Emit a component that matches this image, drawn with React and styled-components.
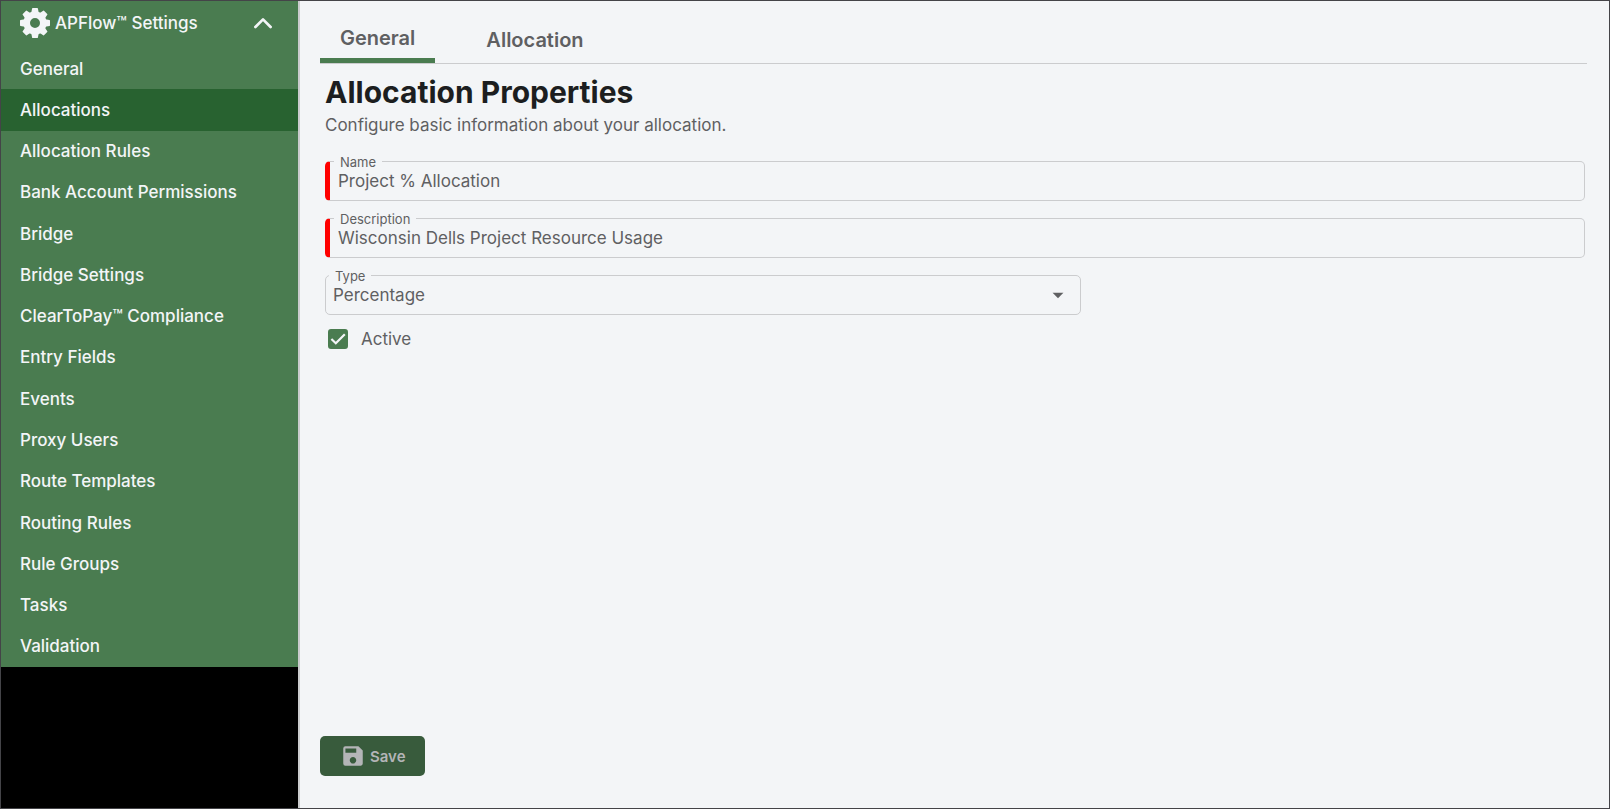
import { useState } from "react";
import styled, { createGlobalStyle } from "styled-components";
import { MdArrowDropDown, MdSave } from "react-icons/md";

const NAV_ITEMS = [
  "General",
  "Allocations",
  "Allocation Rules",
  "Bank Account Permissions",
  "Bridge",
  "Bridge Settings",
  "ClearToPay™ Compliance",
  "Entry Fields",
  "Events",
  "Proxy Users",
  "Route Templates",
  "Routing Rules",
  "Rule Groups",
  "Tasks",
  "Validation",
];

const TEETH = [0, 45, 90, 135, 180, 225, 270, 315];

const GearIcon = () => (
  <svg width="30" height="30" viewBox="0 0 30 30" fill="none" aria-hidden="true">
    <circle cx="15" cy="15" r="8.3" stroke="currentColor" strokeWidth="6.6" />
    {TEETH.map((angle) => (
      <path
        key={angle}
        d="M11.2 5 L12.1 0.5 Q12.2 0 12.7 0 H17.3 Q17.8 0 17.9 0.5 L18.8 5 Z"
        fill="currentColor"
        transform={`rotate(${angle} 15 15)`}
      />
    ))}
  </svg>
);

const ChevronIcon = () => (
  <svg width="18" height="12" viewBox="0 0 18 12" fill="none" aria-hidden="true">
    <path
      d="M1.4 10 L9 2.4 L16.6 10"
      stroke="currentColor"
      strokeWidth="2.7"
      strokeLinecap="round"
      strokeLinejoin="round"
    />
  </svg>
);

const CheckIcon = () => (
  <svg width="20" height="20" viewBox="0 0 20 20" fill="none" aria-hidden="true">
    <path d="M3.4 10 L7.8 14.3 L16.8 5.3" stroke="currentColor" strokeWidth="2.2" />
  </svg>
);

const App = () => {
  const [page, setPage] = useState("Allocations");
  const [open, setOpen] = useState(true);
  const [name, setName] = useState("Project % Allocation");
  const [description, setDescription] = useState(
    "Wisconsin Dells Project Resource Usage"
  );
  const [type, setType] = useState("Percentage");
  const [active, setActive] = useState(true);

  return (
    <>
      <GlobalStyle />
      <Frame>
        <Sidebar>
          <SidebarHeader aria-expanded={open} onClick={() => setOpen(!open)}>
            <GearIcon />
            <span>APFlow™ Settings</span>
            <ChevronIcon />
          </SidebarHeader>
          {open && (
            <NavList>
              {NAV_ITEMS.map((item) => (
                <NavItem key={item}>
                  <NavLink
                    href="#"
                    $active={item === page}
                    onClick={() => setPage(item)}
                  >
                    {item}
                  </NavLink>
                </NavItem>
              ))}
            </NavList>
          )}
        </Sidebar>

        <Main>
          <Tabs role="tablist">
            <Tab role="tab" aria-selected="true" $selected>
              General
            </Tab>
            <Tab role="tab" aria-selected="false">
              Allocation
            </Tab>
          </Tabs>

          <Form>
            <Title>Allocation Properties</Title>
            <Subtitle>Configure basic information about your allocation.</Subtitle>

            <Fields>
              <Field>
                <FieldLabel htmlFor="name" $required>
                  Name
                </FieldLabel>
                <TextInput
                  id="name"
                  type="text"
                  value={name}
                  onChange={(e) => setName(e.target.value)}
                />
              </Field>
              <Field>
                <FieldLabel htmlFor="description" $required>
                  Description
                </FieldLabel>
                <TextInput
                  id="description"
                  type="text"
                  value={description}
                  onChange={(e) => setDescription(e.target.value)}
                />
              </Field>
              <Field $narrow>
                <FieldLabel htmlFor="type">Type</FieldLabel>
                <Select
                  id="type"
                  value={type}
                  onChange={(e) => setType(e.target.value)}
                >
                  <option>Percentage</option>
                </Select>
                <SelectArrow />
              </Field>
            </Fields>

            <CheckRow>
              <CheckBox>
                <input
                  type="checkbox"
                  checked={active}
                  onChange={(e) => setActive(e.target.checked)}
                />
                {active && <CheckIcon />}
              </CheckBox>
              Active
            </CheckRow>
          </Form>

          <SaveButton type="button" disabled>
            <MdSave />
            Save
          </SaveButton>
        </Main>
      </Frame>
    </>
  );
};
export default App;

const GlobalStyle = createGlobalStyle`
  * {
    box-sizing: border-box;
  }

  body {
    margin: 0;
    background: #f3f5f7;
    color: #5f6062;
    font-family: Inter, "Liberation Sans", sans-serif;
    font-size: 17px;
  }

  button, input, select {
    font: inherit;
    color: inherit;
  }
`;

const Frame = styled.div`
  display: flex;
  min-height: 100vh;
  border: 1px solid #444448;
`;

const Sidebar = styled.nav`
  flex: 0 0 299px;
  border-right: 2px solid #cbccce;
  background: #000;
  color: #f3f5f7;
  font-weight: 500;
`;

const SidebarHeader = styled.button`
  display: flex;
  align-items: center;
  gap: 5px;
  width: 100%;
  height: 47px;
  padding: 0 26px 3px 19px;
  border: 0;
  background: #4a7c50;
  text-align: left;
  cursor: pointer;

  span {
    flex: 1;
  }
`;

const NavList = styled.ul`
  display: grid;
  grid-auto-rows: 1fr;
  min-height: 619px;
  margin: 0;
  padding: 0;
  list-style: none;
`;

const NavItem = styled.li`
  display: flex;
`;

const NavLink = styled.a`
  display: flex;
  flex: 1;
  align-items: center;
  padding: 0 19px;
  background: ${(props) => (props.$active ? "#286230" : "#4a7c50")};
  color: inherit;
  text-decoration: none;
`;

const Main = styled.main`
  display: flex;
  flex: 1;
  flex-direction: column;
  padding: 16px 22px 32px 20px;
`;

const Tabs = styled.div`
  display: flex;
  gap: 31px;
  height: 47px;
  border-bottom: 1px solid #cbccce;
`;

const Tab = styled.button`
  padding: 0 20px;
  border: 0;
  border-bottom: ${(props) => (props.$selected ? "5px solid #4a7c50" : "0")};
  background: none;
  font-size: 20px;
  font-weight: 600;
  cursor: pointer;
`;

const Form = styled.form`
  flex: 1;
  padding: 9px 2px 0 5px;
`;

const Title = styled.h1`
  margin: 0;
  color: #1c1e20;
  font-size: 30px;
  font-weight: 700;
  line-height: 38px;
`;

const Subtitle = styled.p`
  margin: 0;
  line-height: 28px;
`;

const Fields = styled.div`
  display: flex;
  flex-direction: column;
  gap: 17px;
  margin-top: 22px;
`;

const Field = styled.div`
  position: relative;
  width: ${(props) => (props.$narrow ? "60%" : "100%")};
`;

const FieldLabel = styled.label`
  position: absolute;
  top: -7px;
  left: ${(props) => (props.$required ? "9px" : "4px")};
  padding: 0 6px;
  background: #f3f5f7;
  font-size: 13px;
  line-height: 16px;
`;

const TextInput = styled.input`
  display: block;
  width: 100%;
  height: 40px;
  padding: 0 8px;
  border: 1px solid #cbccce;
  border-left: 5px solid #f00;
  border-radius: 5px;
  background: none;
`;

const Select = styled.select`
  display: block;
  width: 100%;
  height: 40px;
  padding: 0 7px;
  border: 1px solid #cbccce;
  border-radius: 5px;
  background: none;
  appearance: none;
`;

const SelectArrow = styled(MdArrowDropDown)`
  position: absolute;
  top: 7px;
  right: 10px;
  width: 26px;
  height: 26px;
  pointer-events: none;
`;

const CheckRow = styled.label`
  display: inline-flex;
  align-items: center;
  gap: 13px;
  margin: 12px 3px;
  line-height: 24px;
`;

const CheckBox = styled.span`
  display: grid;
  width: 20px;
  height: 20px;

  input,
  svg {
    grid-area: 1 / 1;
    width: 20px;
    height: 20px;
    margin: 0;
  }

  input {
    appearance: none;
    border: 2px solid #4a7c50;
    border-radius: 3px;
  }

  input:checked {
    background: #4a7c50;
  }

  svg {
    color: #f3f5f7;
    pointer-events: none;
  }
`;

const SaveButton = styled.button`
  display: flex;
  align-items: center;
  align-self: flex-start;
  gap: 4px;
  height: 40px;
  padding: 0 19px 0 20px;
  border: 0;
  border-radius: 5px;
  background: #385b3c;
  color: #b4b5b7;
  font-size: 15px;
  font-weight: 600;

  svg {
    width: 26px;
    height: 26px;
  }
`;
